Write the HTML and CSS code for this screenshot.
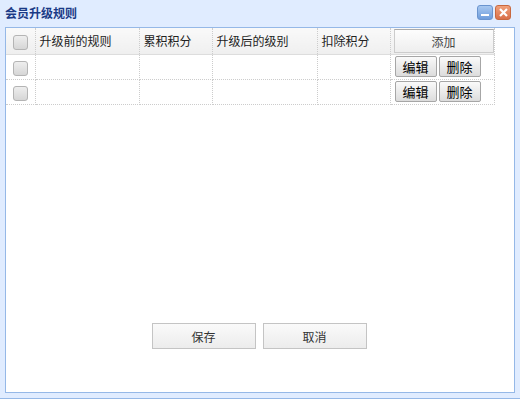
FILE: index.html
```html
<!DOCTYPE html>
<html>
	<head>
		<meta charset="UTF-8">
		<title>会员升级规则</title>
		<link rel="stylesheet" href="styles.css">
	</head>
	<body>
		<div class="window">
			<div class="win-header">
				<div class="win-title">会员升级规则</div>
				<div class="win-tools">
					<span class="tool tool-min"></span>
					<span class="tool tool-close">
						<svg width="9" height="9" viewBox="0 0 9 9"><path d="M1 1L8 8M8 1L1 8" stroke="#fff" stroke-width="2.2" /></svg>
					</span>
				</div>
			</div>
			<div class="win-body">
				<table class="grid">
					<tr class="grid-head">
						<td class="col-ck"><span class="ck"></span></td>
						<td class="col-a">升级前的规则</td>
						<td class="col-b">累积积分</td>
						<td class="col-c">升级后的级别</td>
						<td class="col-d">扣除积分</td>
						<td class="col-op"><button class="btn-add">添加</button></td>
					</tr>
					<tr>
						<td class="col-ck"><span class="ck"></span></td>
						<td></td>
						<td></td>
						<td></td>
						<td></td>
						<td class="col-op"><button class="btn-sm">编辑</button><button class="btn-sm">删除</button></td>
					</tr>
					<tr>
						<td class="col-ck"><span class="ck"></span></td>
						<td></td>
						<td></td>
						<td></td>
						<td></td>
						<td class="col-op"><button class="btn-sm">编辑</button><button class="btn-sm">删除</button></td>
					</tr>
				</table>
				<div class="actions">
					<button class="btn">保存</button>
					<button class="btn">取消</button>
				</div>
			</div>
		</div>
	</body>
</html>
```
FILE: styles.css
```css
* {
	margin: 0;
	padding: 0;
	box-sizing: border-box;
}

body {
	font-family: "Noto Sans CJK SC", "Liberation Sans", sans-serif;
	font-size: 12px;
	background: #e0ecff;
}

.window {
	width: 520px;
	height: 399px;
	background: #e0ecff;
	border-bottom: 1px solid #95b8e7;
	display: flex;
	flex-direction: column;
}

.win-header {
	height: 27px;
	display: flex;
	align-items: center;
	justify-content: space-between;
	padding: 0 9px 2px 5px;
}

.win-title {
	font-weight: bold;
	color: #1a3a86;
	font-size: 12px;
}

.win-tools {
	display: flex;
	gap: 2px;
}

.tool {
	width: 16px;
	height: 15px;
	border-radius: 3px;
	display: flex;
	align-items: center;
	justify-content: center;
}

.tool-min {
	background: linear-gradient(#a8c8f0, #6f9ddc);
	border: 1px solid #6a94cf;
	position: relative;
}

.tool-min::after {
	content: "";
	position: absolute;
	left: 3px;
	right: 3px;
	bottom: 3px;
	height: 2px;
	background: #fff;
}

.tool-close {
	background: linear-gradient(#f0a07a, #d9704a);
	border: 1px solid #c8683f;
}

.win-body {
	margin: 0 5px 5px 5px;
	height: 366px;
	background: #fff;
	border: 1px solid #95b8e7;
	display: flex;
	flex-direction: column;
}

.grid {
	border-collapse: collapse;
	width: 488px;
	table-layout: fixed;
}

.grid td {
	height: 25px;
	border: 1px dotted #ccc;
	border-top: none;
	padding: 0 4px;
	color: #000;
	white-space: nowrap;
}

.grid tr td:first-child {
	border-left: none;
}

.grid-head td {
	height: 26px;
	background: linear-gradient(#f9f9f9, #efefef);
	border-bottom: 1px solid #ddd;
	color: #222;
}

.col-ck { width: 29px; text-align: center; }
.col-a { width: 104px; }
.col-b { width: 73px; }
.col-c { width: 105px; }
.col-d { width: 73px; }
.col-op { width: 104px; }

.grid td.col-ck {
	padding: 0;
}

.grid td.col-op {
	padding: 0 0 0 4px;
}

.grid-head td.col-op {
	padding: 1px 0 0 3px;
	border-left: 1px dotted #2b3bff;
}

.ck {
	display: inline-block;
	width: 15px;
	height: 15px;
	border: 1px solid #b4b4b4;
	border-radius: 3px;
	background: linear-gradient(#eee, #d6d6d6);
	vertical-align: middle;
}

.btn-add {
	width: 100px;
	height: 24px;
	font-family: inherit;
	font-size: 12px;
	color: #444;
	background: linear-gradient(#fdfdfd, #eee);
	border: 1px solid #ccc;
	border-top-color: #aaa;
}

.btn-sm {
	width: 42px;
	height: 21px;
	margin-right: 2px;
	font-family: inherit;
	font-size: 13px;
	color: #000;
	background: linear-gradient(#fafafa, #dcdcdc);
	border: 1px solid #a6a6a6;
	border-radius: 2px;
	vertical-align: middle;
}

.actions {
	margin-top: auto;
	margin-bottom: 43px;
	padding-right: 2px;
	display: flex;
	justify-content: center;
	gap: 7px;
}

.btn {
	width: 104px;
	height: 26px;
	font-family: inherit;
	font-size: 12px;
	color: #333;
	background: linear-gradient(#fafafa, #ececec);
	border: 1px solid #c4c4c4;
}
```
